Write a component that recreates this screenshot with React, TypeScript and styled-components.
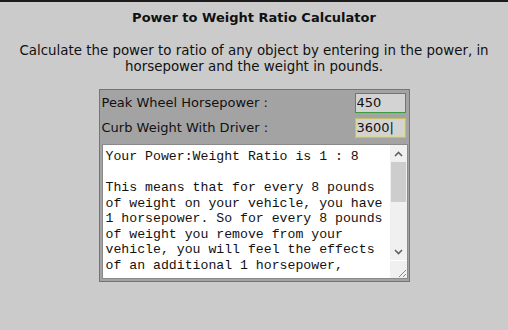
import React from "react";
import styled, { createGlobalStyle } from "styled-components";

const GlobalStyle = createGlobalStyle`
  html, body {
    margin: 0;
    padding: 0;
    background: #cbcbcb;
  }
  body {
    font-family: "DejaVu Sans", Verdana, sans-serif;
    color: #111;
  }
`;

const Page = styled.div`
  border-top: 2px solid #1c1c1c;
  height: 328px;
  display: flex;
  flex-direction: column;
  align-items: center;
`;

const Title = styled.h1`
  margin: 8px 0 0;
  font-size: 13px;
  font-weight: bold;
  line-height: 15px;
  text-align: center;
`;

const Intro = styled.p`
  margin: 18px 0 0;
  width: 500px;
  font-size: 13.4px;
  line-height: 16px;
  text-align: center;
`;

const Calculator = styled.div`
  margin-top: 14px;
  width: 306px;
  border: 1px solid #3e9a3e;
  background: #a3a3a3;
  padding: 0 1px 2px 2px;
  display: flex;
  flex-direction: column;
`;

const Row = styled.div`
  display: flex;
  align-items: center;
  justify-content: space-between;
  height: 25px;
`;

const Label = styled.label`
  font-size: 13px;
  color: #111;
`;

const NumberInput = styled.input<{ $focused?: boolean }>`
  box-sizing: border-box;
  width: 51px;
  height: 20px;
  margin: 0 2px 0 0;
  padding: 0 1px;
  border: 1px solid ${(p) => (p.$focused ? "#c2c06a" : "#3e9a3e")};
  outline: ${(p) => (p.$focused ? "1px solid #d9d79a" : "none")};
  outline-offset: -2px;
  background: #d3d3d3;
  font-family: "DejaVu Sans", Verdana, sans-serif;
  font-size: 13px;
  color: #111;
`;

const ResultBox = styled.div`
  margin-top: 4px;
  height: 133px;
  display: flex;
  border: 1px solid #8a8a8a;
  background: #fff;
`;

const ResultText = styled.div`
  flex: 1;
  overflow: hidden;
  padding: 4px 0 0 3px;
  white-space: pre;
  font-family: "Liberation Mono", "Courier New", monospace;
  font-size: 13.2px;
  line-height: 15.5px;
  color: #111;
`;

const Scrollbar = styled.div`
  width: 17px;
  display: flex;
  flex-direction: column;
  background: #f0f0f0;
`;

const ScrollButton = styled.div`
  height: 17px;
  display: flex;
  align-items: center;
  justify-content: center;
  color: #606060;
`;

const Track = styled.div`
  flex: 1;
  display: flex;
  flex-direction: column;
`;

const Thumb = styled.div`
  margin: 0 1px;
  height: 40px;
  background: #cdcdcd;
`;

const Grip = styled.div`
  height: 17px;
  background: #f0f0f0;
  border-top: 1px solid #fff;
  display: flex;
  align-items: flex-end;
  justify-content: flex-end;
`;

const Chevron = ({ up }: { up?: boolean }) => (
  <svg width="9" height="6" viewBox="0 0 9 6">
    <path
      d={up ? "M1 5 L4.5 1.5 L8 5" : "M1 1 L4.5 4.5 L8 1"}
      fill="none"
      stroke="currentColor"
      strokeWidth="1.6"
    />
  </svg>
);

const resultLines = [
  "Your Power:Weight Ratio is 1 : 8",
  "",
  "This means that for every 8 pounds",
  "of weight on your vehicle, you have",
  "1 horsepower. So for every 8 pounds",
  "of weight you remove from your",
  "vehicle, you will feel the effects",
  "of an additional 1 horsepower,",
].join("\n");

export default function App() {
  return (
    <>
      <GlobalStyle />
      <Page>
        <Title>Power to Weight Ratio Calculator</Title>
        <Intro>
          Calculate the power to ratio of any object by entering in the power, in
          horsepower and the weight in pounds.
        </Intro>
        <Calculator>
          <Row>
            <Label htmlFor="hp">Peak Wheel Horsepower :</Label>
            <NumberInput id="hp" defaultValue="450" />
          </Row>
          <Row>
            <Label htmlFor="wt">Curb Weight With Driver :</Label>
            <NumberInput id="wt" defaultValue="3600|" $focused />
          </Row>
          <ResultBox>
            <ResultText>{resultLines}</ResultText>
            <Scrollbar>
              <ScrollButton>
                <Chevron up />
              </ScrollButton>
              <Track>
                <Thumb />
              </Track>
              <ScrollButton>
                <Chevron />
              </ScrollButton>
              <Grip>
                <svg width="12" height="12" viewBox="0 0 12 12">
                  <path d="M11 4 L4 11 M11 8 L8 11" stroke="#888" strokeWidth="1" />
                </svg>
              </Grip>
            </Scrollbar>
          </ResultBox>
        </Calculator>
      </Page>
    </>
  );
}
